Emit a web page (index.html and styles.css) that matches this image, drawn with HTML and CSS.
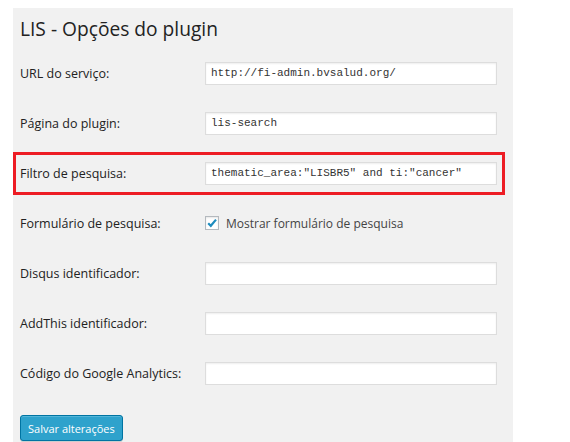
FILE: index.html
```html
<!DOCTYPE html>
<html>
<head>
<meta charset="utf-8">
<link rel="stylesheet" href="styles.css">
</head>
<body>
<div class="panel">
  <h2 class="title">LIS - Opções do plugin</h2>
  <div class="form">
    <div class="row">
      <label class="label">URL do serviço:</label>
      <div class="field"><input class="input" type="text" value="http://fi-admin.bvsalud.org/"></div>
    </div>
    <div class="row">
      <label class="label">Página do plugin:</label>
      <div class="field"><input class="input" type="text" value="lis-search"></div>
    </div>
    <div class="row highlight-row">
      <div class="highlight">
        <label class="label">Filtro de pesquisa:</label>
        <div class="field"><input class="input" type="text" value='thematic_area:"LISBR5" and ti:"cancer"'></div>
      </div>
    </div>
    <div class="row">
      <label class="label">Formulário de pesquisa:</label>
      <div class="field check-field">
        <span class="checkbox">
          <svg width="12" height="12" viewBox="0 0 12 12"><path d="M2.2 6.2 L4.8 8.8 L10 2.6" fill="none" stroke="#1e8cbe" stroke-width="2.2"/></svg>
        </span>
        <span class="check-text">Mostrar formulário de pesquisa</span>
      </div>
    </div>
    <div class="row">
      <label class="label">Disqus identificador:</label>
      <div class="field"><input class="input" type="text" value=""></div>
    </div>
    <div class="row">
      <label class="label">AddThis identificador:</label>
      <div class="field"><input class="input" type="text" value=""></div>
    </div>
    <div class="row">
      <label class="label">Código do Google Analytics:</label>
      <div class="field"><input class="input" type="text" value=""></div>
    </div>
  </div>
  <div class="actions">
    <button class="button" type="button">Salvar alterações</button>
  </div>
</div>
</body>
</html>
```
FILE: styles.css
```css
html, body {
  margin: 0;
  padding: 0;
  background: #ffffff;
}
body {
  padding: 8px 0 0 13px;
  font-family: "Open Sans", "Noto Sans", sans-serif;
  color: #222;
}
.panel {
  width: 500px;
  height: 434px;
  background: #f1f1f1;
}
.title {
  margin: 0;
  padding: 7px 0 0 7px;
  height: 40px;
  box-sizing: border-box;
  font-size: 19.2px;
  font-weight: 400;
  color: #222;
  line-height: 28px;
}
.form {
  display: flex;
  flex-direction: column;
}
.row {
  display: flex;
  align-items: center;
  height: 50px;
}
.label {
  width: 192px;
  padding-left: 7px;
  box-sizing: border-box;
  font-size: 12.5px;
  color: #222;
}
.field {
  display: flex;
  align-items: center;
}
.input {
  width: 292px;
  height: 23px;
  box-sizing: border-box;
  margin: 0;
  padding: 0 5px;
  border: 1px solid #dddddd;
  box-shadow: inset 0 1px 2px rgba(0,0,0,0.07);
  background: #fff;
  font-family: "Liberation Mono", monospace;
  font-size: 11px;
  color: #333;
  outline: none;
}
.highlight {
  display: flex;
  align-items: center;
  width: 492px;
  height: 43px;
  box-sizing: border-box;
  border: 3px solid #ed1c24;
}
.highlight .label {
  width: 189px;
  padding-left: 4px;
}
.check-field {
  gap: 7px;
}
.checkbox {
  width: 14px;
  height: 14px;
  box-sizing: border-box;
  border: 1px solid #b4b9be;
  background: #fff;
  box-shadow: inset 0 1px 2px rgba(0,0,0,0.1);
  display: flex;
  align-items: center;
  justify-content: center;
}
.check-text {
  font-size: 12px;
  color: #444;
}
.actions {
  padding: 17px 0 0 7px;
}
.button {
  height: 26px;
  padding: 0 7px;
  border: 1px solid #0074a2;
  border-radius: 3px;
  background: #2ea2cc;
  color: #fff;
  font-family: "Open Sans", "Noto Sans", sans-serif;
  font-size: 11px;
  box-shadow: inset 0 1px 0 rgba(120,200,230,0.5), 0 1px 0 rgba(0,0,0,0.15);
}
```
